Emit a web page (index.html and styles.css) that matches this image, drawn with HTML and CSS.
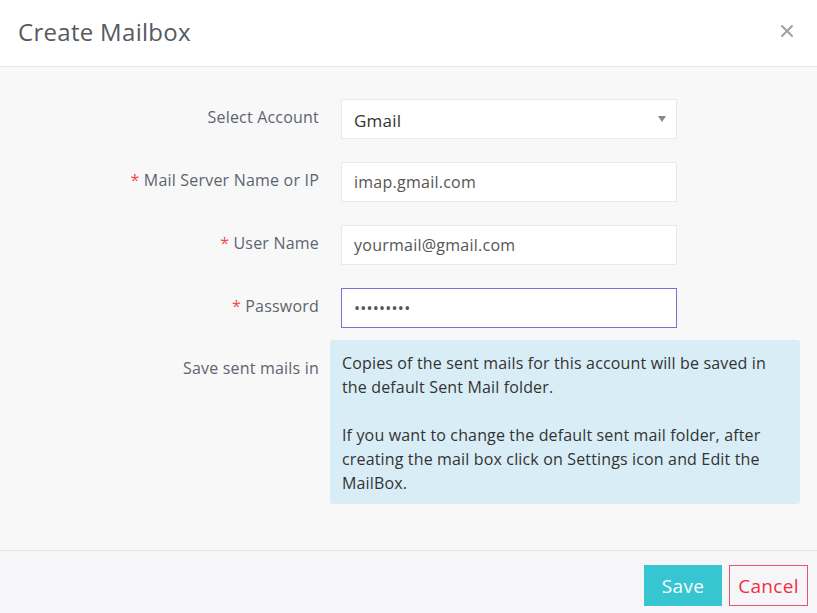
FILE: index.html
```html
<!DOCTYPE html>
<html>
<head>
<meta charset="utf-8">
<link rel="stylesheet" href="styles.css">
</head>
<body>
<div class="modal">
  <div class="header">
    <h1 class="title">Create Mailbox</h1>
    <span class="close">
      <svg width="14" height="14" viewBox="0 0 14 14"><path d="M2 2L12 12M12 2L2 12" stroke="#a0a0a0" stroke-width="2" stroke-linecap="round"/></svg>
    </span>
  </div>
  <div class="body">
    <div class="row">
      <label class="label">Select Account</label>
      <div class="field select">
        <span class="value">Gmail</span>
        <span class="arrow"></span>
      </div>
    </div>
    <div class="row">
      <label class="label"><span class="req">*</span> Mail Server Name or IP</label>
      <input class="field" type="text" value="imap.gmail.com">
    </div>
    <div class="row">
      <label class="label"><span class="req">*</span> User Name</label>
      <input class="field" type="text" value="yourmail@gmail.com">
    </div>
    <div class="row">
      <label class="label"><span class="req">*</span> Password</label>
      <input class="field active" type="password" value="123456789">
    </div>
    <div class="row info-row">
      <label class="label">Save sent mails in</label>
      <div class="info">Copies of the sent mails for this account will be saved in the default Sent Mail folder.<br><br>If you want to change the default sent mail folder, after creating the mail box click on Settings icon and Edit the MailBox.</div>
    </div>
  </div>
  <div class="footer">
    <button class="btn save">Save</button>
    <button class="btn cancel">Cancel</button>
  </div>
</div>
</body>
</html>
```
FILE: styles.css
```css
* { box-sizing: border-box; }
html, body { margin: 0; padding: 0; }
body {
  width: 817px;
  height: 613px;
  font-family: "Open Sans", "Noto Sans", sans-serif;
  background: #ffffff;
  overflow: hidden;
}
.modal { display: flex; flex-direction: column; height: 613px; }
.header {
  height: 67px;
  border-bottom: 1px solid #e6e6e8;
  display: flex;
  align-items: center;
  justify-content: space-between;
  padding: 0 23px 0 18px;
  background: #fff;
}
.title {
  margin: 0;
  font-size: 24px;
  font-weight: 400;
  color: #555a60;
  letter-spacing: 0.3px;
  padding-bottom: 3px;
}
.close { display: flex; padding-bottom: 4px; }
.body {
  background: #f8f8f9;
  padding: 32px 0 46px 0;
  border-bottom: 1px solid #e4e5e8;
  display: flex;
  flex-direction: column;
  gap: 23px;
}
.row { display: flex; align-items: center; }
.label {
  width: 319px;
  text-align: right;
  font-size: 16px;
  letter-spacing: 0.2px;
  color: #5d646e;
  padding-bottom: 4px;
}
.req { color: #f04a4a; }
.field {
  margin-left: 22px;
  width: 336px;
  height: 40px;
  border: 1px solid #e8e9ee;
  background: #fff;
  font-family: "Open Sans", "Noto Sans", sans-serif;
  font-size: 16px;
  letter-spacing: 0.25px;
  color: #555;
  padding: 0 12px;
  outline: none;
}
.field.active { border-color: #7c70d7; color: #555; }
.select { display: flex; align-items: center; justify-content: space-between; color: #333; padding-right: 10px; font-size: 17px; }
.select .value { padding-top: 2px; }
.arrow {
  width: 0; height: 0;
  border-left: 4px solid transparent;
  border-right: 4px solid transparent;
  border-top: 6px solid #888;
}
.info-row { align-items: flex-start; margin-top: -11px; }
.info-row .label { padding-top: 17px; }
.info {
  margin-left: 11px;
  width: 470px;
  background: #d9edf7;
  border-radius: 3px;
  padding: 11px 12px 9px 12px;
  font-size: 16px;
  letter-spacing: 0.15px;
  line-height: 24px;
  color: #333;
}
.footer {
  flex: 1;
  background: #f6f6f8;
  display: flex;
  justify-content: flex-end;
  align-items: flex-start;
  gap: 7px;
  padding: 14px 9px 0 0;
}
.btn {
  height: 41px;
  font-family: "Open Sans", "Noto Sans", sans-serif;
  font-size: 19px;
  letter-spacing: 0.3px;
  border-radius: 0;
  cursor: pointer;
  padding: 0;
}
.save { width: 78px; background: #35c6d2; color: #fff; border: none; }
.cancel { width: 79px; background: transparent; color: #f0303f; border: 1px solid #e5566a; }
```
